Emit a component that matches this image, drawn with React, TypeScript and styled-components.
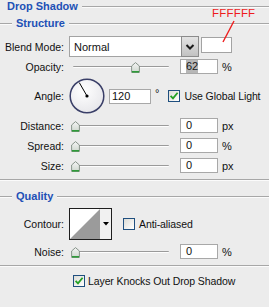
import React from 'react';
import styled, { createGlobalStyle } from 'styled-components';

const Global = createGlobalStyle`
  html, body { margin: 0; padding: 0; background: #ececec; }
  body { font-family: "Liberation Sans", Arial, sans-serif; }
`;

const Panel = styled.div`
  position: relative;
  width: 269px;
  height: 307px;
  overflow: hidden;
  background: #ececec;
  font-family: "Liberation Sans", Arial, sans-serif;
  font-size: 10.5px;
  color: #111;
  display: flex;
  flex-direction: column;
`;

const TitleRow = styled.div<{ $lead: number; $mt: number }>`
  display: flex;
  align-items: center;
  height: 13px;
  margin-top: ${(p) => p.$mt}px;
  padding-left: ${(p) => (p.$lead > 0 ? 0 : 7)}px;
  &::before {
    content: '';
    display: ${(p) => (p.$lead > 0 ? 'block' : 'none')};
    width: ${(p) => p.$lead}px;
    border-top: 1px solid #a7a7a7;
    border-bottom: 1px solid #fbfbfb;
    margin-right: 4px;
  }
  &::after {
    content: '';
    flex: 1;
    border-top: 1px solid #a7a7a7;
    border-bottom: 1px solid #fbfbfb;
    margin-left: 4px;
  }
`;

const Title = styled.span`
  font-weight: bold;
  font-size: 11px;
  color: #2150b6;
  line-height: 13px;
`;

const Divider = styled.div<{ $mt: number }>`
  margin-top: ${(p) => p.$mt}px;
  border-top: 1px solid #a7a7a7;
  border-bottom: 1px solid #fbfbfb;
`;

const Row = styled.div<{ $h: number; $mt: number; $pl?: number }>`
  display: flex;
  align-items: center;
  height: ${(p) => p.$h}px;
  margin-top: ${(p) => p.$mt}px;
  padding-left: ${(p) => p.$pl ?? 0}px;
`;

const Label = styled.span`
  width: 64px;
  margin-right: 5px;
  text-align: right;
  white-space: nowrap;
  flex-shrink: 0;
`;

const Select = styled.div`
  width: 130px;
  height: 21px;
  box-sizing: border-box;
  border: 1px solid #a3a3a3;
  background: #fff;
  display: flex;
  align-items: center;
  justify-content: space-between;
  padding-left: 4px;
  font-size: 11px;
`;

const SelectButton = styled.div`
  width: 18px;
  height: 21px;
  margin-right: -1px;
  box-sizing: border-box;
  border: 1px solid #8c8c8c;
  background: linear-gradient(#e4e4e4, #c2c2c2);
  display: flex;
  align-items: center;
  justify-content: center;
`;

const Swatch = styled.div`
  align-self: flex-start;
  margin-top: 1px;
  margin-left: 2px;
  width: 31px;
  height: 16px;
  box-sizing: border-box;
  border: 1px solid #a3a3a3;
  background: #fff;
`;

const SliderBox = styled.div<{ $w: number }>`
  position: relative;
  width: ${(p) => p.$w}px;
  height: 15px;
  flex-shrink: 0;
  &::before {
    content: '';
    position: absolute;
    left: 4px;
    right: 11px;
    top: 7px;
    height: 0;
    border-top: 1px solid #9a9a9a;
    border-bottom: 1px solid #fdfdfd;
    border-radius: 1px;
  }
`;

const Thumb = styled.svg`
  position: absolute;
  top: 3px;
  width: 9px;
  height: 11px;
`;

const Input = styled.div<{ $w: number; $pl: number }>`
  width: ${(p) => p.$w}px;
  height: 15px;
  box-sizing: border-box;
  border: 1px solid #a8a8a8;
  background: #fff;
  padding-left: ${(p) => p.$pl}px;
  display: flex;
  align-items: center;
  line-height: 13px;
  flex-shrink: 0;
  font-size: 11px;
`;

const Selected = styled.span`
  background: #b7b7b7;
  color: #1a1a1a;
`;

const Unit = styled.span`
  margin-left: 4px;
  font-size: 11px;
`;

const Degree = styled.span`
  margin-left: 4px;
  align-self: flex-start;
  margin-top: 9px;
  font-size: 11px;
`;

const CheckWrap = styled.label<{ $ml: number; $gap: number }>`
  display: flex;
  align-items: center;
  margin-left: ${(p) => p.$ml}px;
  gap: ${(p) => p.$gap}px;
  white-space: nowrap;
  letter-spacing: -0.1px;
`;

const Box = styled.span`
  width: 12px;
  height: 12px;
  box-sizing: border-box;
  border: 1px solid #1f4f7f;
  background: linear-gradient(135deg, #dcdcd6, #ffffff);
  display: flex;
  align-items: center;
  justify-content: center;
  flex-shrink: 0;
`;

const Annotation = styled.div`
  position: absolute;
  left: 212px;
  top: 7px;
  color: #ee1c1c;
  font-size: 11.5px;
  letter-spacing: 0.2px;
`;

const Pointer = styled.svg`
  position: absolute;
  left: 220px;
  top: 20px;
`;

const Thumbnail = styled.svg`
  flex-shrink: 0;
  display: block;
`;

const SliderThumb: React.FC<{ value: number }> = ({ value }) => (
  <Thumb style={{ left: 2 + value * 0.97 }} viewBox="0 0 9 11">
    <defs>
      <linearGradient id={`tg${value}`} x1="0" y1="0" x2="0" y2="1">
        <stop offset="0" stopColor="#f4f4f4" />
        <stop offset="1" stopColor="#cfd8cf" />
      </linearGradient>
    </defs>
    <path d="M4.5 0.6 L8.4 4 L8.4 10.4 L0.6 10.4 L0.6 4 Z" fill={`url(#tg${value})`} stroke="#7d8a80" strokeWidth="0.9" />
    <path d="M1 9.8 H8" stroke="#2f9a3a" strokeWidth="1.6" />
  </Thumb>
);

const Slider: React.FC<{ value: number }> = ({ value }) => (
  <SliderBox $w={111}>
    <SliderThumb value={value} />
  </SliderBox>
);

const Check: React.FC<{ checked: boolean }> = ({ checked }) => (
  <Box>
    {checked && (
      <svg width="10" height="10" viewBox="0 0 10 10">
        <path d="M1.6 4.8 L4 7.4 L8.6 1.8" fill="none" stroke="#23a024" strokeWidth="1.8" />
      </svg>
    )}
  </Box>
);

const Dial: React.FC<{ angle: number }> = ({ angle }) => {
  const r = (angle * Math.PI) / 180;
  const cx = 18;
  const cy = 18;
  const x2 = cx + Math.cos(r) * 15.5;
  const y2 = cy - Math.sin(r) * 15.5;
  return (
    <Thumbnail width="36" height="36" viewBox="0 0 36 36">
      <defs>
        <radialGradient id="dialg" cx="0.4" cy="0.35" r="0.7">
          <stop offset="0" stopColor="#ffffff" />
          <stop offset="1" stopColor="#e6e6ea" />
        </radialGradient>
      </defs>
      <circle cx={cx} cy={cy} r="16.8" fill="url(#dialg)" stroke="#3a3f68" strokeWidth="1.5" />
      <line x1={cx} y1={cy} x2={x2} y2={y2} stroke="#000" strokeWidth="1" />
      <circle cx={cx} cy={cy} r="1.6" fill="#000" />
    </Thumbnail>
  );
};

const Contour: React.FC = () => (
  <Thumbnail width="43" height="32" viewBox="0 0 43 32">
    <rect x="0.5" y="0.5" width="42" height="31" fill="#f1f1f1" stroke="#1e1e1e" />
    <rect x="1" y="1" width="30" height="30" fill="#ffffff" />
    <polygon points="1,31 31,1 31,31" fill="#9b9b9b" />
    <polygon points="34,14 40,14 37,17.5" fill="#000" />
  </Thumbnail>
);

const Chevron: React.FC = () => (
  <svg width="10" height="8" viewBox="0 0 10 8">
    <path d="M1.5 2 L5 5.5 L8.5 2" fill="none" stroke="#1b1b1b" strokeWidth="2" />
  </svg>
);

const ValueRow: React.FC<{ label: string; value: number; unit: string; mt: number; selected?: boolean }> = ({
  label,
  value,
  unit,
  mt,
  selected,
}) => (
  <Row $h={15} $mt={mt}>
    <Label>{label}</Label>
    <Slider value={value} />
    <Input $w={38} $pl={5}>{selected ? <Selected>{value}</Selected> : value}</Input>
    <Unit>{unit}</Unit>
  </Row>
);

export default function App() {
  return (
    <Panel>
      <Global />
      <TitleRow $lead={0} $mt={0}>
        <Title>Drop Shadow</Title>
      </TitleRow>
      <TitleRow $lead={12} $mt={4}>
        <Title>Structure</Title>
      </TitleRow>

      <Row $h={21} $mt={6}>
        <Label>Blend Mode:</Label>
        <Select>
          <span>Normal</span>
          <SelectButton>
            <Chevron />
          </SelectButton>
        </Select>
        <Swatch />
      </Row>

      <ValueRow label="Opacity:" value={62} unit="%" mt={2} selected />

      <Row $h={36} $mt={4}>
        <Label>Angle:</Label>
        <Dial angle={120} />
        <Input $w={42} $pl={2} style={{ marginLeft: 4 }}>120</Input>
        <Degree>°</Degree>
        <CheckWrap $ml={9} $gap={4}>
          <Check checked />
          <span>Use Global Light</span>
        </CheckWrap>
      </Row>

      <ValueRow label="Distance:" value={0} unit="px" mt={4} />
      <ValueRow label="Spread:" value={0} unit="%" mt={5} />
      <ValueRow label="Size:" value={0} unit="px" mt={5} />

      <Divider $mt={6} />

      <TitleRow $lead={12} $mt={9}>
        <Title>Quality</Title>
      </TitleRow>

      <Row $h={32} $mt={5}>
        <Label>Contour:</Label>
        <Contour />
        <CheckWrap $ml={11} $gap={4}>
          <Check checked={false} />
          <span>Anti-aliased</span>
        </CheckWrap>
      </Row>

      <ValueRow label="Noise:" value={0} unit="%" mt={4} />

      <Divider $mt={6} />

      <Row $h={12} $mt={8} $pl={73}>
        <CheckWrap $ml={0} $gap={3}>
          <Check checked />
          <span>Layer Knocks Out Drop Shadow</span>
        </CheckWrap>
      </Row>

      <Annotation>FFFFFF</Annotation>
      <Pointer width="16" height="24" viewBox="0 0 16 24">
        <line x1="14" y1="1" x2="3" y2="22" stroke="#ee1c1c" strokeWidth="1.4" />
      </Pointer>
    </Panel>
  );
}
